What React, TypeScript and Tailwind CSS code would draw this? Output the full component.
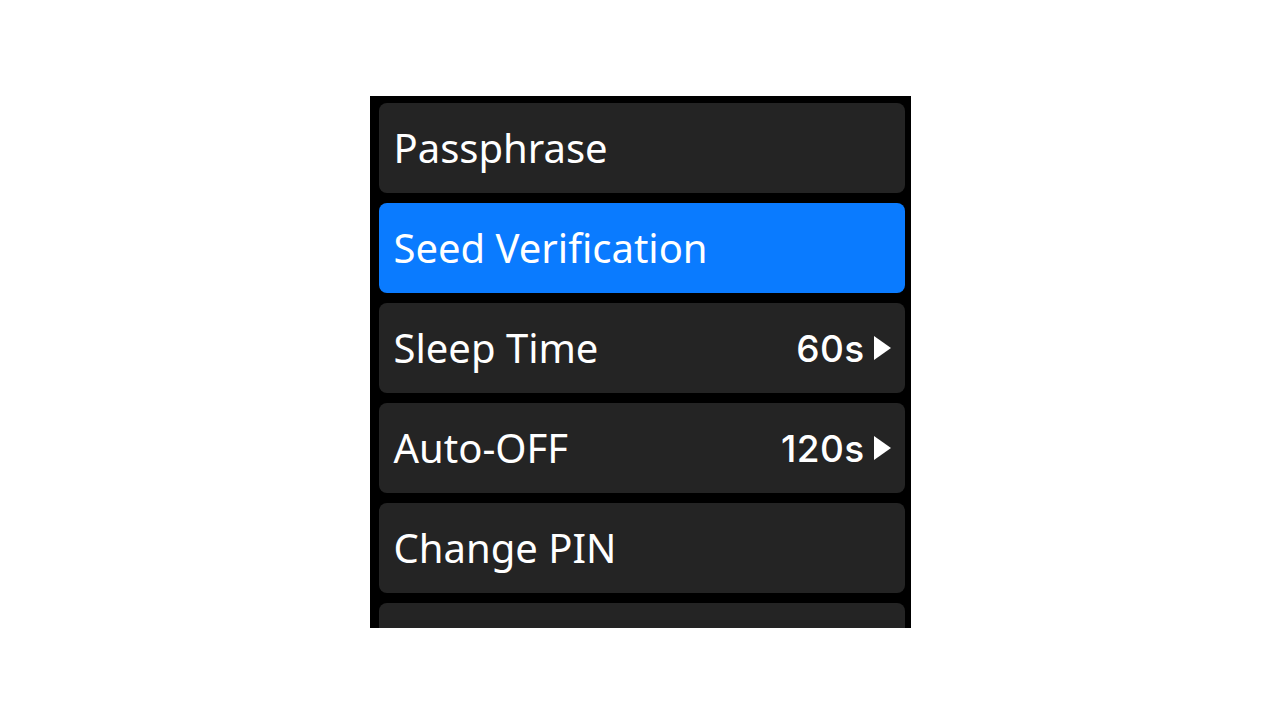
import { ReactNode } from "react";

type Item = {
  label: string;
  value?: string;
  active?: boolean;
};

const items: Item[] = [
  { label: "Passphrase" },
  { label: "Seed Verification", active: true },
  { label: "Sleep Time", value: "60s" },
  { label: "Auto-OFF", value: "120s" },
  { label: "Change PIN" },
  { label: "" },
];

function Caret() {
  return (
    <svg viewBox="0 0 17 24" width="17" height="24" aria-hidden className="ml-[9px] shrink-0">
      <polygon points="0 0 17 12 0 24" fill="#ffffff" />
    </svg>
  );
}

function Row({ item }: { item: Item }): ReactNode {
  return (
    <div
      className={`flex h-[90px] shrink-0 items-center justify-between rounded-[8px] pl-[15px] pr-[14px] ${
        item.active ? "bg-[#0a7bff]" : "bg-[#242424]"
      }`}
    >
      <span className="font-['Noto_Sans',sans-serif] text-[40px] leading-none text-white">
        {item.label}
      </span>
      {item.value && (
        <span className="flex items-center">
          <span className="font-['Inter',sans-serif] text-[37px] font-medium leading-none tracking-[0.01em] text-white">
            {item.value}
          </span>
          <Caret />
        </span>
      )}
    </div>
  );
}

export default function App() {
  return (
    <div className="min-h-screen w-full bg-white pt-[96px]">
      <div className="mx-auto flex h-[532px] w-[541px] flex-col gap-[10px] overflow-hidden bg-black pl-[9px] pr-[6px] pt-[7px]">
        {items.map((item, i) => (
          <Row key={i} item={item} />
        ))}
      </div>
    </div>
  );
}
